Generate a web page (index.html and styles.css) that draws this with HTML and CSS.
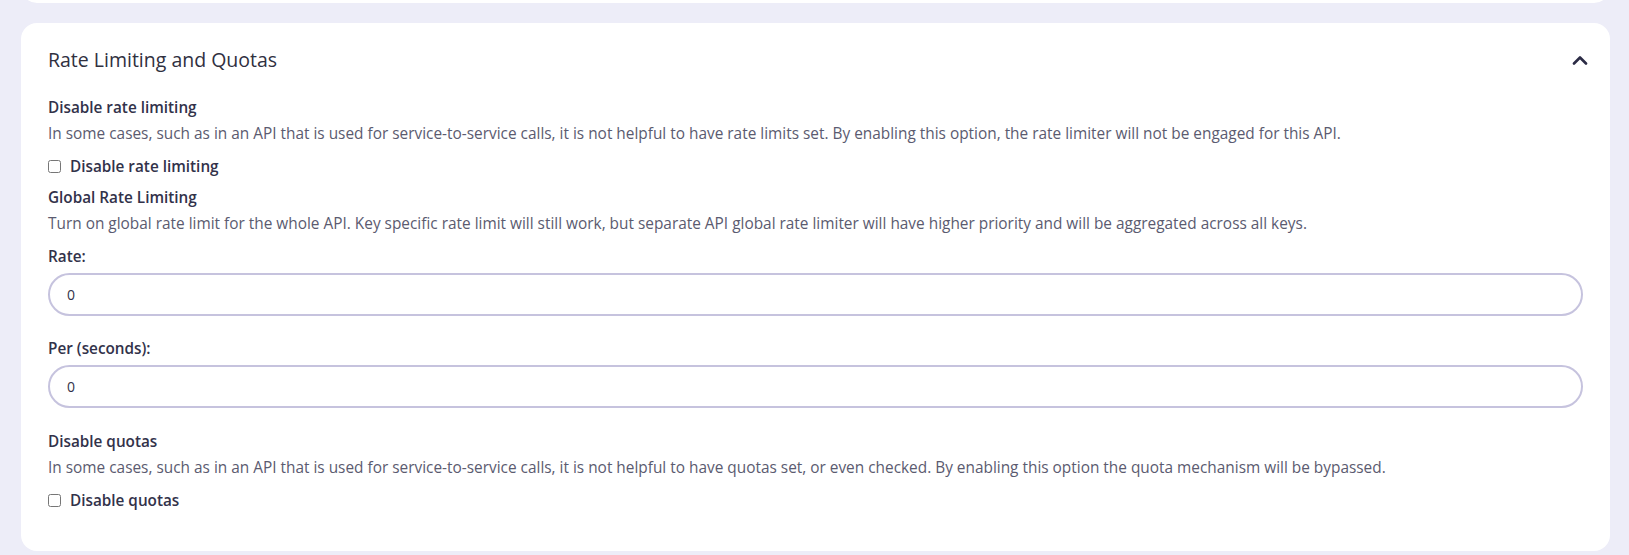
FILE: index.html
```html
<!DOCTYPE html>
<html lang="en">
<head>
  <meta charset="UTF-8">
  <meta name="viewport" content="width=device-width, initial-scale=1.0">
  <title>Rate Limiting and Quotas</title>
  <link rel="stylesheet" href="styles.css">
</head>
<body>
  <div class="prev-clip">
    <div class="prev-card"></div>
  </div>

  <section class="card">
    <div class="card-header">
      <h2 class="card-title">Rate Limiting and Quotas</h2>
      <button class="collapse-btn" aria-label="Collapse">
        <svg width="16" height="10" viewBox="0 0 16 10">
          <path d="M2 8.5 L8 2.5 L14 8.5" fill="none" stroke="#2b2b45" stroke-width="2.6" stroke-linecap="round" stroke-linejoin="round"/>
        </svg>
      </button>
    </div>

    <div class="card-body">
      <div class="field-label">Disable rate limiting</div>
      <p class="field-desc">In some cases, such as in an API that is used for service-to-service calls, it is not helpful to have rate limits set. By enabling this option, the rate limiter will not be engaged for this API.</p>
      <label class="check-row">
        <input type="checkbox">
        <span>Disable rate limiting</span>
      </label>

      <div class="field-label global">Global Rate Limiting</div>
      <p class="field-desc">Turn on global rate limit for the whole API. Key specific rate limit will still work, but separate API global rate limiter will have higher priority and will be aggregated across all keys.</p>

      <div class="field-label input-label">Rate:</div>
      <input type="text" class="text-input" value="0">

      <div class="field-label input-label per">Per (seconds):</div>
      <input type="text" class="text-input" value="0">

      <div class="field-label quotas">Disable quotas</div>
      <p class="field-desc">In some cases, such as in an API that is used for service-to-service calls, it is not helpful to have quotas set, or even checked. By enabling this option the quota mechanism will be bypassed.</p>
      <label class="check-row">
        <input type="checkbox">
        <span>Disable quotas</span>
      </label>
    </div>
  </section>
</body>
</html>
```

FILE: styles.css
```css
body {
  margin: 0;
  font-family: "Open Sans", "Noto Sans", sans-serif;
  background: #ededf8;
  color: #32324a;
}

.prev-clip {
  height: 3px;
  overflow: hidden;
  margin: 0 19px 0 21px;
}

.prev-card {
  height: 40px;
  margin-top: -37px;
  background: #fff;
  border-radius: 16px;
}

.card {
  margin: 20px 19px 0 21px;
  background: #fff;
  border-radius: 16px;
  padding: 24px 22px 41px 27px;
}

.card-header {
  display: flex;
  align-items: center;
  justify-content: space-between;
  height: 26px;
}

.card-title {
  margin: 0;
  font-size: 19.5px;
  font-weight: 500;
  line-height: 26px;
  color: #30303f;
}

.collapse-btn {
  border: none;
  background: none;
  padding: 0;
  display: flex;
  cursor: pointer;
}

.card-body {
  display: flex;
  flex-direction: column;
  align-items: flex-start;
  padding: 24px 5px 0 0;
}

.field-label {
  font-size: 15.3px;
  font-weight: 600;
  line-height: 20px;
  color: #32324a;
}

.field-desc {
  margin: 7px 0 0;
  font-size: 15.4px;
  line-height: 20px;
  color: #5b5b70;
}

.check-row {
  display: flex;
  align-items: center;
  gap: 9px;
  margin-top: 12px;
  font-size: 15.3px;
  font-weight: 600;
  line-height: 20px;
  color: #32324a;
}

.check-row input {
  margin: 0;
  width: 13px;
  height: 13px;
}

.global {
  margin-top: 11px;
}

.input-label {
  margin-top: 12px;
}

.per {
  margin-top: 22px;
}

.text-input {
  box-sizing: border-box;
  width: 100%;
  height: 43px;
  margin-top: 7px;
  padding: 0 17px;
  border: 2px solid #c6c3de;
  border-radius: 22px;
  font-family: inherit;
  font-size: 14px;
  color: #32324a;
  background: #fff;
  outline: none;
}

.quotas {
  margin-top: 23px;
}
```
